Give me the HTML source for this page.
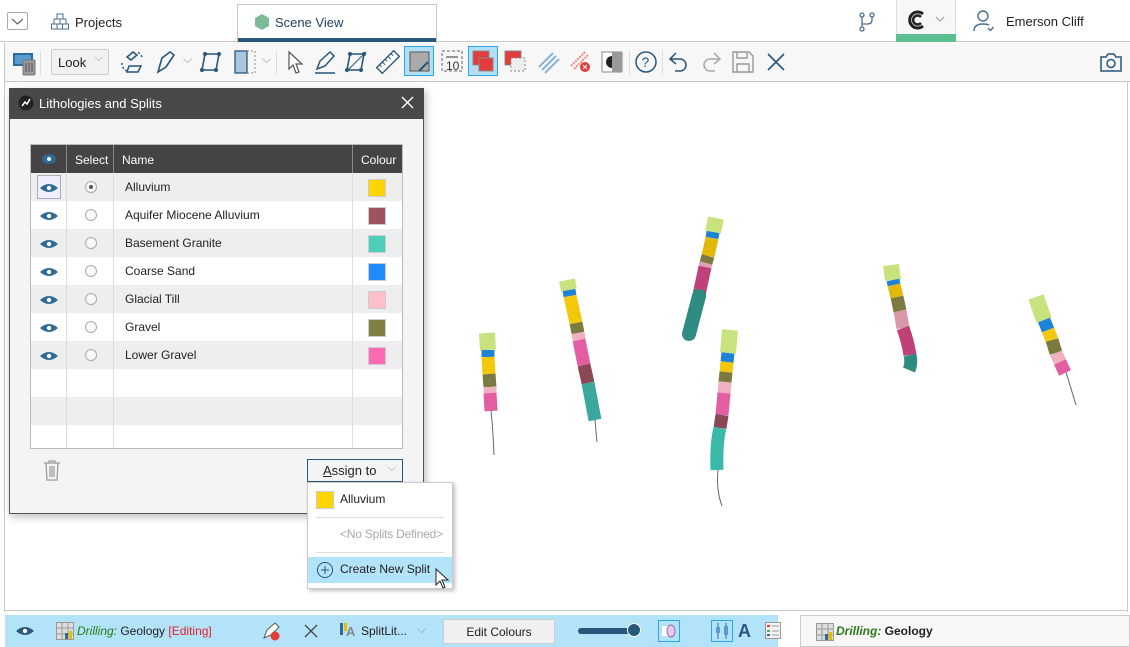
<!DOCTYPE html>
<html><head><meta charset="utf-8"><style>
*{box-sizing:border-box;margin:0;padding:0}
body{width:1130px;height:647px;overflow:hidden;background:#fff;font-family:"Liberation Sans",sans-serif;font-size:12px;color:#222;position:relative}
.abs{position:absolute}
.tb svg{position:absolute}
.row{position:absolute;left:0;width:372px;height:28px;font-size:12px}
.row .n{position:absolute;left:94px;top:7px}
.row .sw{position:absolute;left:337px;top:6px;width:18px;height:18px;border:1px solid #ccc}
.row .rad{position:absolute;left:54px;top:8px;width:12px;height:12px;border:1px solid #aaa;border-radius:50%;background:#fafafa}
.vl{position:absolute;top:0;width:1px;height:305px;background:#ddd}
</style></head><body>
<div class="abs" style="left:0;top:0;width:1130px;height:42px;background:#fff;border-bottom:1px solid #c8c8c8"></div>
<div class="abs" style="left:7px;top:12px;width:21px;height:18px;border:1px solid #aaa;border-radius:2px"></div>
<svg class="abs" style="left:7px;top:12px" width="21" height="18"><path d="M5 7l5.5 5 5.5-5" fill="none" stroke="#666" stroke-width="1.2"/></svg>
<svg class="abs" style="left:51px;top:13px" width="18" height="18"><g fill="#fff" stroke="#4a6e90" stroke-width="1"><rect x="6" y="1" width="6" height="5"/><rect x="3" y="6" width="6" height="5"/><rect x="9" y="6" width="6" height="5"/><rect x="0.5" y="11" width="6" height="5"/><rect x="6" y="11" width="6" height="5"/><rect x="11.5" y="11" width="6" height="5"/></g></svg>
<div class="abs" style="left:75px;top:15px;font-size:13px">Projects</div>
<div class="abs" style="left:237px;top:4px;width:200px;height:39px;background:#fff;border:1px solid #c8c8c8;border-bottom:none"></div>
<div class="abs" style="left:238px;top:38px;width:198px;height:4px;background:#27577a"></div>
<svg class="abs" style="left:253px;top:13px" width="18" height="18"><polygon points="9,1 16,5 16,13 9,17 2,13 2,5" fill="#7dba97"/></svg>
<div class="abs" style="left:275px;top:15px;font-size:13px;color:#1f3f5f">Scene View</div>
<svg class="abs" style="left:858px;top:12px" width="18" height="20"><g fill="none" stroke="#4a6e90" stroke-width="1.3"><circle cx="4" cy="3" r="2"/><circle cx="14" cy="3" r="2"/><circle cx="4" cy="17" r="2"/><path d="M4 5v10M14 5v3q0 4-5 4H4"/></g></svg>
<div class="abs" style="left:896px;top:0;width:60px;height:42px;background:#f7f7f7;border-left:1px solid #ddd;border-right:1px solid #ddd"></div>
<div class="abs" style="left:896px;top:34px;width:60px;height:8px;background:#5bbf8f"></div>
<svg class="abs" style="left:906px;top:9px" width="22" height="22"><path d="M17 5A8 8 0 1 0 17 17" fill="none" stroke="#222" stroke-width="3"/><path d="M15 8A4.5 4.5 0 1 0 15 14" fill="none" stroke="#222" stroke-width="2.5"/></svg>
<svg class="abs" style="left:935px;top:15px" width="10" height="8"><path d="M1 2l4 4 4-4" fill="none" stroke="#999"/></svg>
<svg class="abs" style="left:972px;top:9px" width="26" height="24"><g fill="none" stroke="#4a6e90" stroke-width="1.4"><circle cx="11" cy="7" r="5"/><path d="M2 22q0-7 9-7q4 0 6 1M16 19l2.5 2.5 3-3.5"/></g></svg>
<div class="abs" style="left:1006px;top:14px;font-size:13px">Emerson Cliff</div>

<div class="abs tb" style="left:4px;top:43px;width:1126px;height:39px;background:#f7f7f7;border-bottom:1px solid #c8c8c8;border-left:1px solid #c8c8c8">
<svg style="left:7px;top:7px" width="26" height="26"><rect x="1" y="3" width="20" height="13" fill="#2f6a98"/><rect x="3" y="5" width="16" height="9" fill="#5a9bd0"/><rect x="11" y="10" width="12" height="15" rx="1" fill="#999" stroke="#777"/><path d="M14 13v9M17 13v9M20 13v9" stroke="#555"/></svg>
<div style="position:absolute;left:35px;top:8px;width:1px;height:24px;background:#ddd"></div>
<div style="position:absolute;left:46px;top:6px;width:58px;height:26px;border:1px solid #ccc;background:#f1f1f1;border-radius:2px;font-size:13px;padding:5px 6px">Look<span style="position:absolute;right:5px;top:2px;color:#999;font-size:11px">⌵</span></div>
<svg style="left:115px;top:6px" width="26" height="26"><g fill="none" stroke="#27577a" stroke-width="1.5"><path d="M7 8l6 -5 4 3-6 5z"/><path d="M9 17h12l-3 6H7z"/><path d="M2 14a8 8 0 0 0 5 8M22 8a8 8 0 0 0-5-5" stroke-dasharray="2 2"/></g></svg>
<svg style="left:148px;top:6px" width="26" height="26"><path d="M5 23l4-14 8-6 4 3-8 12z" fill="none" stroke="#27577a" stroke-width="1.6"/></svg>
<span style="position:absolute;left:178px;top:9px;color:#999">⌵</span>
<svg style="left:193px;top:6px" width="26" height="26"><path d="M7 5h14l-3 16H4z" fill="none" stroke="#27577a" stroke-width="1.6"/><g fill="#27577a"><circle cx="7" cy="5" r="2"/><circle cx="21" cy="5" r="2"/><circle cx="18" cy="21" r="2"/><circle cx="4" cy="21" r="2"/></g></svg>
<svg style="left:229px;top:6px" width="26" height="26"><rect x="1" y="2" width="12" height="22" fill="#a8c8e0" stroke="#27577a" stroke-width="1.3"/><path d="M13 2h8v22h-8" fill="none" stroke="#888" stroke-dasharray="2 2"/></svg>
<span style="position:absolute;left:257px;top:9px;color:#999">⌵</span>
<div style="position:absolute;left:271px;top:8px;width:1px;height:24px;background:#ddd"></div>
<svg style="left:278px;top:6px" width="26" height="26"><path d="M6 3l13 12h-6l3 8-3 1-3-8-4 4z" fill="#fff" stroke="#555" stroke-width="1.2"/></svg>
<svg style="left:307px;top:6px" width="26" height="26"><path d="M3 24h20M5 20l3-8 10-9 4 4-9 10z" fill="none" stroke="#27577a" stroke-width="1.5"/></svg>
<svg style="left:338px;top:6px" width="26" height="26"><path d="M7 5h14l-3 16H4z" fill="none" stroke="#27577a" stroke-width="1.6"/><path d="M3 23L23 3" stroke="#27577a"/><g fill="#27577a"><circle cx="7" cy="5" r="2"/><circle cx="21" cy="5" r="2"/><circle cx="18" cy="21" r="2"/><circle cx="4" cy="21" r="2"/></g></svg>
<svg style="left:370px;top:6px" width="26" height="26"><g transform="rotate(-45 13 13)"><rect x="1" y="9" width="24" height="8" fill="#fff" stroke="#27577a" stroke-width="1.4"/><path d="M5 9v3M9 9v4M13 9v3M17 9v4M21 9v3" stroke="#27577a"/></g></svg>
<div style="position:absolute;left:399px;top:3px;width:30px;height:30px;background:#b3dff5;border:1px solid #2aa5e8"></div>
<svg style="left:404px;top:8px" width="22" height="22"><rect x="1" y="1" width="19" height="19" fill="#aaa" stroke="#555"/><path d="M10 20l9-9" stroke="#27577a" stroke-width="2"/></svg>
<svg style="left:436px;top:7px" width="24" height="24"><rect x="1" y="1" width="20" height="20" fill="none" stroke="#666" stroke-dasharray="3 2"/><text x="5" y="20" font-size="12" fill="#333" font-family="Liberation Sans">10</text><path d="M5 7h12" stroke="#333"/></svg>
<div style="position:absolute;left:463px;top:3px;width:30px;height:30px;background:#b3dff5;border:1px solid #2aa5e8"></div>
<svg style="left:467px;top:7px" width="24" height="24"><rect x="1" y="1" width="16" height="14" fill="#e23c3c" stroke="#888"/><rect x="7" y="8" width="14" height="13" fill="#e23c3c" stroke="#888"/></svg>
<svg style="left:499px;top:7px" width="24" height="24"><rect x="1" y="1" width="16" height="14" fill="#e23c3c" stroke="#888"/><rect x="7" y="8" width="14" height="13" fill="#eee" stroke="#888" stroke-dasharray="2 2"/></svg>
<svg style="left:531px;top:7px" width="24" height="24"><path d="M3 17L17 3M6 20L20 6M9 23L23 9" stroke="#8ab4d4" stroke-width="2"/></svg>
<svg style="left:563px;top:6px" width="24" height="24"><path d="M3 17L17 3M6 20L20 6" stroke="#e88" stroke-width="2" stroke-dasharray="2 1"/><circle cx="17" cy="18" r="5" fill="#e23c3c"/><path d="M15 16l4 4M19 16l-4 4" stroke="#fff"/></svg>
<svg style="left:596px;top:6px" width="24" height="26"><rect x="1" y="3" width="20" height="20" fill="#fff" stroke="#888"/><rect x="11" y="3" width="10" height="20" fill="#999"/><path d="M11 7a6 6 0 0 0 0 12z" fill="#222"/></svg>
<div style="position:absolute;left:624px;top:8px;width:1px;height:24px;background:#ddd"></div>
<svg style="left:629px;top:7px" width="24" height="24"><circle cx="12" cy="12" r="10" fill="none" stroke="#27577a" stroke-width="1.5"/><text x="7.5" y="17" font-size="14" fill="#27577a" font-family="Liberation Sans">?</text></svg>
<div style="position:absolute;left:657px;top:8px;width:1px;height:24px;background:#ddd"></div>
<svg style="left:662px;top:6px" width="24" height="26"><path d="M9 4L3 10l6 5M3 10h10a6 6 0 0 1 0 12H8" fill="none" stroke="#27577a" stroke-width="1.5"/></svg>
<svg style="left:694px;top:6px" width="24" height="26"><path d="M15 4l6 6-6 5M21 10H11a6 6 0 0 0 0 12h5" fill="none" stroke="#aaa" stroke-width="1.5"/></svg>
<svg style="left:726px;top:6px" width="24" height="26"><path d="M2 3h16l4 4v16H2z M6 3v6h10V3M6 23v-8h12v8" fill="none" stroke="#999" stroke-width="1.4"/></svg>
<svg style="left:760px;top:8px" width="22" height="22"><path d="M3 3l16 16M19 3L3 19" stroke="#27577a" stroke-width="1.6"/></svg>
<svg style="left:1094px;top:7px" width="24" height="24"><path d="M2 7h5l2-3h6l2 3h5v14H2z" fill="none" stroke="#27577a" stroke-width="1.5"/><circle cx="12" cy="13.5" r="4" fill="none" stroke="#27577a" stroke-width="1.5"/></svg>
</div>

<div class="abs" style="left:4px;top:82px;width:1px;height:530px;background:#c8c8c8"></div>
<div class="abs" style="left:1127px;top:82px;width:1px;height:530px;background:#c8c8c8"></div>
<div class="abs" style="left:4px;top:610px;width:1124px;height:1px;background:#c8c8c8"></div>

<svg class="abs" style="left:0;top:0" width="1130" height="647">
<g fill="none" stroke="#666" stroke-width="1"><path d="M491 410q2 20 3 45"/><path d="M595 420q1 12 2 22"/><path d="M718 470q-2 20 4 36"/><path d="M1066 372l10 33"/></g>
<g stroke-width="13" stroke-linecap="butt">
<line x1="487" y1="333" x2="488" y2="350" stroke="#c8e27e" stroke-width="16"/><line x1="488" y1="350" x2="488" y2="357" stroke="#1e82d8"/><line x1="488" y1="357" x2="489" y2="374" stroke="#f2c80a"/><line x1="489" y1="374" x2="490" y2="387" stroke="#7c7a40"/><line x1="490" y1="387" x2="490" y2="393" stroke="#f0b0c0"/><line x1="490" y1="393" x2="491" y2="411" stroke="#e35ea0"/>
<line x1="567" y1="280" x2="569" y2="290" stroke="#c8e27e" stroke-width="16"/><line x1="569" y1="290" x2="570" y2="296" stroke="#1e82d8"/><line x1="570" y1="296" x2="576" y2="323" stroke="#f2c80a"/><line x1="576" y1="323" x2="578" y2="333" stroke="#7c7a40"/><line x1="578" y1="333" x2="579" y2="340" stroke="#f0b0c0"/><line x1="579" y1="340" x2="584" y2="365" stroke="#e35ea0"/><line x1="584" y1="365" x2="588" y2="383" stroke="#8a4855"/><line x1="588" y1="383" x2="595" y2="420" stroke="#3aa89c"/>
<line x1="716" y1="218" x2="713" y2="232" stroke="#c8e27e" stroke-width="16"/><line x1="713" y1="232" x2="712" y2="238" stroke="#1e82d8"/><line x1="712" y1="238" x2="708" y2="256" stroke="#e2b80a"/><line x1="708" y1="256" x2="706" y2="263" stroke="#7c7a40"/><line x1="706" y1="263" x2="705" y2="267" stroke="#d8a0b0"/><line x1="705" y1="267" x2="700" y2="290" stroke="#c0407a"/><line x1="700" y1="290" x2="699" y2="296" stroke="#8a4855"/><line x1="699" y1="296" x2="689" y2="334" stroke="#2f8c80" stroke-width="14" stroke-linecap="round"/>
<line x1="730" y1="330" x2="728" y2="353" stroke="#c8e27e" stroke-width="16"/><line x1="728" y1="353" x2="727" y2="362" stroke="#1e82d8"/><line x1="727" y1="362" x2="726" y2="372" stroke="#f2c80a"/><line x1="726" y1="372" x2="725" y2="382" stroke="#7c7a40"/><line x1="725" y1="382" x2="724" y2="393" stroke="#f0b0c0"/><line x1="724" y1="393" x2="722" y2="415" stroke="#e35ea0"/><line x1="722" y1="415" x2="720" y2="428" stroke="#8a4855"/><path d="M720 428q-4 15-3 42" stroke="#3ab8a8" fill="none"/>
<line x1="891" y1="265" x2="893" y2="280" stroke="#c8e27e" stroke-width="16"/><line x1="893" y1="280" x2="894" y2="285" stroke="#1e82d8"/><line x1="894" y1="285" x2="897" y2="297" stroke="#e2b80a"/><line x1="897" y1="297" x2="900" y2="311" stroke="#7c7a40"/><line x1="900" y1="311" x2="903" y2="328" stroke="#d898a8"/><path d="M903 328q5 14 7 27" stroke="#c0407a" fill="none"/><path d="M910 355q2 8-1 15" stroke="#2f8c80" fill="none"/>
<line x1="1036" y1="297" x2="1044" y2="320" stroke="#c8e27e" stroke-width="16"/><line x1="1044" y1="320" x2="1048" y2="330" stroke="#1e82d8"/><line x1="1048" y1="330" x2="1052" y2="340" stroke="#f2c80a"/><line x1="1052" y1="340" x2="1056" y2="353" stroke="#7c7a40"/><line x1="1056" y1="353" x2="1060" y2="362" stroke="#f0b0c0"/><line x1="1060" y1="362" x2="1065" y2="373" stroke="#e35ea0"/>
</g></svg>

<div class="abs" style="left:9px;top:88px;width:415px;height:426px;background:#f4f4f4;border:1px solid #555;box-shadow:2px 3px 8px rgba(0,0,0,.25)"></div>
<div class="abs" style="left:9px;top:88px;width:415px;height:31px;background:#4a4846"></div>
<svg class="abs" style="left:18px;top:95px" width="16" height="16"><circle cx="8" cy="8" r="7.5" fill="#222"/><path d="M4 11l3-4 2 2 3-5" stroke="#fff" stroke-width="1.5" fill="none"/></svg>
<div class="abs" style="left:39px;top:96px;color:#fff;font-size:13px">Lithologies and Splits</div>
<svg class="abs" style="left:401px;top:96px" width="13" height="13"><path d="M1 1l11 11M12 1L1 12" stroke="#fff" stroke-width="1.4"/></svg>
<div class="abs" style="left:30px;top:144px;width:373px;height:305px;background:#fff;border:1px solid #bbb;overflow:hidden">
 <div style="position:absolute;left:0;top:0;width:372px;height:28px;background:#454343;color:#fff;font-size:12px">
  <svg style="position:absolute;left:10px;top:8px" width="16" height="12"><ellipse cx="8" cy="6" rx="7" ry="5" fill="#2e6a94"/><circle cx="8" cy="6" r="2" fill="#fff"/></svg>
  <span style="position:absolute;left:44px;top:8px">Select</span><span style="position:absolute;left:91px;top:8px">Name</span><span style="position:absolute;left:330px;top:8px">Colour</span>
  <div style="position:absolute;left:35px;top:0;width:1px;height:28px;background:#888"></div><div style="position:absolute;left:82px;top:0;width:1px;height:28px;background:#888"></div><div style="position:absolute;left:321px;top:0;width:1px;height:28px;background:#888"></div>
 </div>
 <div class="row" style="top:28px;background:#eee"></div><div class="row" style="top:84px;background:#eee"></div><div class="row" style="top:140px;background:#eee"></div><div class="row" style="top:196px;background:#eee"></div><div class="row" style="top:252px;background:#eee"></div>
 <div class="vl" style="left:35px;top:28px"></div><div class="vl" style="left:82px;top:28px"></div><div class="vl" style="left:321px;top:28px"></div>
 <div style="position:absolute;left:6px;top:30px;width:24px;height:24px;border:1px solid #aab;background:#eef"></div>
 <div class="row" style="top:28px"><span class="rad"><span style="position:absolute;left:3px;top:3px;width:4px;height:4px;border-radius:50%;background:#555"></span></span><span class="n">Alluvium</span><span class="sw" style="background:#ffd500"></span></div>
 <div class="row" style="top:56px"><span class="rad"></span><span class="n">Aquifer Miocene Alluvium</span><span class="sw" style="background:#a0525e"></span></div>
 <div class="row" style="top:84px"><span class="rad"></span><span class="n">Basement Granite</span><span class="sw" style="background:#4ecfbb"></span></div>
 <div class="row" style="top:112px"><span class="rad"></span><span class="n">Coarse Sand</span><span class="sw" style="background:#1e8cff"></span></div>
 <div class="row" style="top:140px"><span class="rad"></span><span class="n">Glacial Till</span><span class="sw" style="background:#ffc0cb"></span></div>
 <div class="row" style="top:168px"><span class="rad"></span><span class="n">Gravel</span><span class="sw" style="background:#808040"></span></div>
 <div class="row" style="top:196px"><span class="rad"></span><span class="n">Lower Gravel</span><span class="sw" style="background:#ff69b4"></span></div>
 <svg style="position:absolute;left:8px;top:37px" width="20" height="200"><g fill="#2e6a94"><path id="e" d="M1 6q9-8 18 0q-9 8-18 0z"/><use href="#e" y="28"/><use href="#e" y="56"/><use href="#e" y="84"/><use href="#e" y="112"/><use href="#e" y="140"/><use href="#e" y="168"/></g><g fill="#fff"><circle cx="10" cy="6" r="2.2"/><circle cx="10" cy="34" r="2.2"/><circle cx="10" cy="62" r="2.2"/><circle cx="10" cy="90" r="2.2"/><circle cx="10" cy="118" r="2.2"/><circle cx="10" cy="146" r="2.2"/><circle cx="10" cy="174" r="2.2"/></g></svg>
</div>
<svg class="abs" style="left:42px;top:459px" width="20" height="22"><path d="M2 4h16M7 4V2h6v2M4 4l1 17h10l1-17M8 7v11M10 7v11M12 7v11" fill="none" stroke="#999" stroke-width="1.2"/></svg>
<div class="abs" style="left:307px;top:459px;width:96px;height:23px;border:1px solid #27577a;background:#f4f4f4;font-size:13px;padding:3px 0 0 15px"><u>A</u>ssign to<span style="position:absolute;right:6px;top:2px;color:#999;font-size:11px">⌵</span></div>
<div class="abs" style="left:307px;top:482px;width:146px;height:107px;background:#fff;border:1px solid #ccc;box-shadow:2px 2px 4px rgba(0,0,0,.25)"></div>
<div class="abs" style="left:316px;top:491px;width:18px;height:18px;background:#ffd500;border:1px solid #ccc"></div>
<div class="abs" style="left:340px;top:492px;font-size:12px">Alluvium</div>
<div class="abs" style="left:316px;top:517px;width:128px;height:1px;background:#ddd"></div>
<div class="abs" style="left:340px;top:527px;font-size:12px;color:#aaa;letter-spacing:-0.2px">&lt;No Splits Defined&gt;</div>
<div class="abs" style="left:316px;top:552px;width:128px;height:1px;background:#ddd"></div>
<div class="abs" style="left:308px;top:557px;width:144px;height:26px;background:#b3e3f8"></div>
<svg class="abs" style="left:316px;top:561px" width="18" height="18"><circle cx="9" cy="9" r="7.5" fill="none" stroke="#27577a"/><path d="M9 5v8M5 9h8" stroke="#27577a"/></svg>
<div class="abs" style="left:340px;top:562px;font-size:12px">Create New Split</div>
<svg class="abs" style="left:435px;top:568px" width="14" height="22"><path d="M1 1v16l4-4 3 7 2-1-3-7h6z" fill="#fff" stroke="#222"/></svg>

<div class="abs" style="left:5px;top:615px;width:773px;height:32px;background:#b3e3f8"></div>
<svg class="abs" style="left:15px;top:625px" width="20" height="12"><path d="M1 6q9-8 18 0q-9 8-18 0z" fill="#27577a"/><circle cx="10" cy="6" r="2.2" fill="#fff"/></svg>
<svg class="abs" style="left:56px;top:622px" width="18" height="18"><rect x="0.5" y="0.5" width="17" height="17" fill="#ddd" stroke="#999"/><path d="M0 6h18M0 12h18M6 0v18M12 0v18" stroke="#999"/><rect x="9" y="11" width="3" height="6" fill="#2e6a94"/><rect x="13" y="9" width="3" height="8" fill="#e2c000"/></svg>
<div class="abs" style="left:77px;top:624px;font-size:12px"><i style="color:#2a7a1a">Drilling:</i> Geology <span style="color:#e8202a">[Editing]</span></div>
<svg class="abs" style="left:260px;top:620px" width="22" height="22"><path d="M4 18l3-8 8-7 4 4-8 8z" fill="#fff" stroke="#555"/><circle cx="15" cy="16" r="4.5" fill="#e23c3c"/></svg>
<svg class="abs" style="left:303px;top:623px" width="16" height="16"><path d="M2 2l12 12M14 2L2 14" stroke="#444" stroke-width="1.3"/></svg>
<svg class="abs" style="left:338px;top:621px" width="20" height="20"><rect x="2" y="2" width="3" height="12" fill="#2e6a94"/><rect x="6" y="2" width="3" height="8" fill="#e2c000"/><text x="8" y="15" font-size="13" font-weight="bold" fill="#888" font-family="Liberation Sans">A</text></svg>
<div class="abs" style="left:361px;top:624px;font-size:12px">SplitLit...</div>
<span class="abs" style="left:417px;top:622px;color:#999">⌵</span>
<div class="abs" style="left:443px;top:619px;width:112px;height:25px;background:#f0f0f0;border:1px solid #ccc;font-size:12px;text-align:center;padding-top:5px">Edit Colours</div>
<div class="abs" style="left:578px;top:628px;width:52px;height:6px;border-radius:3px;background:#27577a"></div>
<div class="abs" style="left:627px;top:623px;width:14px;height:14px;border-radius:50%;background:#27577a;border:1px solid #fff"></div>
<div class="abs" style="left:658px;top:620px;width:22px;height:22px;border:1px solid #2aa5e8"></div>
<svg class="abs" style="left:661px;top:623px" width="16" height="16"><rect x="1" y="3" width="8" height="10" fill="#fff"/><ellipse cx="10" cy="8" rx="4" ry="6" fill="#e8c8f0" stroke="#a060b0"/></svg>
<div class="abs" style="left:711px;top:620px;width:22px;height:22px;border:1px solid #2aa5e8"></div>
<svg class="abs" style="left:714px;top:622px" width="16" height="18"><path d="M4 1v16M12 1v16" stroke="#2e6a94"/><rect x="2" y="5" width="4" height="6" fill="#5a9bd0"/><rect x="10" y="4" width="4" height="9" fill="#5a9bd0"/></svg>
<div class="abs" style="left:738px;top:621px;font-size:18px;font-weight:bold;color:#27577a">A</div>
<svg class="abs" style="left:765px;top:622px" width="18" height="18"><rect x="0.5" y="0.5" width="15" height="16" fill="#f4f4f4" stroke="#999"/><rect x="2" y="3" width="3" height="2" fill="#e23c3c"/><rect x="2" y="8" width="3" height="2" fill="#4caf50"/><rect x="2" y="12" width="3" height="2" fill="#2e6a94"/><path d="M7 4h7M7 9h7M7 13h7" stroke="#999"/></svg>
<div class="abs" style="left:800px;top:615px;width:330px;height:32px;background:#f7f7f7;border:1px solid #ccc"></div>
<svg class="abs" style="left:816px;top:623px" width="18" height="18"><rect x="0.5" y="0.5" width="17" height="17" fill="#ddd" stroke="#999"/><path d="M0 6h18M0 12h18M6 0v18M12 0v18" stroke="#999"/><rect x="9" y="11" width="3" height="6" fill="#2e6a94"/><rect x="13" y="9" width="3" height="8" fill="#e2c000"/></svg>
<div class="abs" style="left:836px;top:624px;font-size:12px"><i style="color:#2a7a1a;font-weight:bold">Drilling:</i> <span style="font-weight:bold;color:#222">Geology</span></div>
</body></html>
